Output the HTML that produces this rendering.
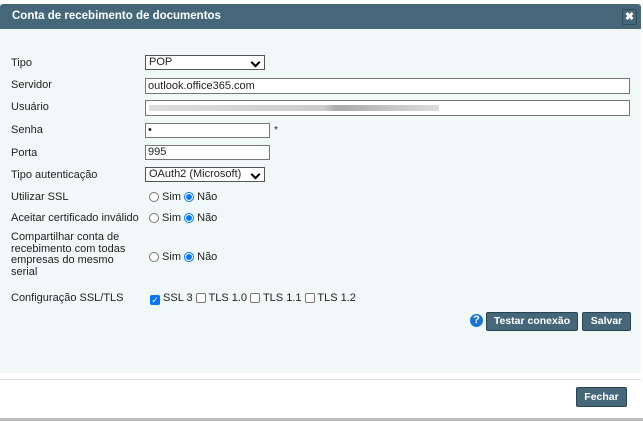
<!DOCTYPE html>
<html><head><style>
body{margin:0;width:643px;height:421px;background:#fff;font-family:"Liberation Sans",Arial,sans-serif;font-size:11px;color:#222;position:relative;overflow:hidden}
.a{position:absolute}
.hdr{left:0;top:4px;width:641px;height:25px;background:#456779;border-radius:3px 3px 0 0}
.ttl{left:12px;top:10px;color:#fff;font-weight:bold;font-size:11.5px}
.x{left:622px;top:9px;width:13px;height:14px;border:1px solid #2f4c5b;border-radius:2px;background:#456779;color:#fff;font-weight:bold;font-size:11px;text-align:center;line-height:14px}
.bd{left:0;top:29px;width:641px;height:344px;background:#f0f8f8}
.in{background:#fff;border:1px solid #767676;box-sizing:border-box;padding-left:2px}
.sel{background:#fff;border:1px solid #555;line-height:13px;padding-left:3px;font-size:11px;box-sizing:border-box}
.ch{position:absolute;right:5px;top:3px;width:5px;height:5px;border-right:2px solid #000;border-bottom:2px solid #000;transform:rotate(45deg)}
.lbl{left:11px}
.btn{background:#456779;border:1px solid #2b4350;border-radius:2px;color:#fff;font-weight:bold;font-size:10.5px;text-align:center;box-sizing:border-box}
.r{display:inline-block;width:10px;height:10px;border:1px solid #777;border-radius:50%;vertical-align:-2px;box-sizing:border-box;background:#fff}
.rs{border:1px solid #0075ff;background:radial-gradient(circle,#0075ff 2.6px,#fff 3.2px)}
.c{display:inline-block;width:10px;height:10px;border:1px solid #777;border-radius:2px;vertical-align:-2px;box-sizing:border-box;background:#fff}
.cs{background:#0075ff;border-color:#0075ff;color:#fff;font-size:9px;line-height:9px;text-align:center}
</style></head><body>
<div class="a hdr"></div>
<div class="a ttl">Conta de recebimento de documentos</div>
<div class="a x">✖</div>
<div class="a bd"></div>
<div class="a lbl" style="top:57px">Tipo</div>
<div class="a sel" style="left:145px;top:55px;width:120px;height:15px">POP<span class="ch"></span></div>
<div class="a lbl" style="top:79px">Servidor</div>
<div class="a in" style="left:145px;top:78px;width:485px;height:16px;line-height:14px">outlook.office365.com</div>
<div class="a lbl" style="top:101px">Usuário</div>
<div class="a in" style="left:145px;top:100px;width:485px;height:16px"><div style="position:absolute;left:3px;top:4px;width:290px;height:6px;background:linear-gradient(90deg,#ddd,#ccc 60%,#aaa 65%,#ddd)"></div></div>
<div class="a lbl" style="top:124px">Senha</div>
<div class="a in" style="left:145px;top:123px;width:125px;height:15px;line-height:12px">•</div>
<div class="a" style="left:274px;top:125px;font-size:10px">*</div>
<div class="a lbl" style="top:147px">Porta</div>
<div class="a in" style="left:145px;top:145px;width:125px;height:15px;line-height:13px">995</div>
<div class="a lbl" style="top:169px">Tipo autenticação</div>
<div class="a sel" style="left:145px;top:167px;width:120px;height:15px">OAuth2 (Microsoft)<span class="ch"></span></div>
<div class="a lbl" style="top:191px">Utilizar SSL</div>
<div class="a" style="left:149px;top:191px"><span class="r"></span> Sim <span class="r rs"></span> Não</div>
<div class="a lbl" style="top:212px">Aceitar certificado inválido</div>
<div class="a" style="left:149px;top:212px"><span class="r"></span> Sim <span class="r rs"></span> Não</div>
<div class="a lbl" style="top:232px;line-height:11.5px;width:130px">Compartilhar conta de recebimento com todas empresas do mesmo serial</div>
<div class="a" style="left:149px;top:251px"><span class="r"></span> Sim <span class="r rs"></span> Não</div>
<div class="a lbl" style="top:292px">Configuração SSL/TLS</div>
<div class="a" style="left:150px;top:292px"><span class="c cs">✓</span> SSL 3 <span class="c"></span> TLS 1.0 <span class="c"></span> TLS 1.1 <span class="c"></span> TLS 1.2</div>
<div class="a" style="left:470px;top:314px;width:13px;height:13px;border-radius:50%;background:#1a73d9;color:#fff;font-weight:bold;font-size:11px;text-align:center;line-height:13px">?</div>
<div class="a btn" style="left:486px;top:312px;width:92px;height:19px;line-height:17px">Testar conexão</div>
<div class="a btn" style="left:582px;top:312px;width:49px;height:19px;line-height:17px">Salvar</div>
<div class="a" style="left:0;top:379px;width:641px;height:1px;background:#ddd"></div>
<div class="a btn" style="left:576px;top:387px;width:51px;height:20px;line-height:18px">Fechar</div>
<div class="a" style="left:0;top:418px;width:643px;height:3px;background:#bbb"></div>
</body></html>
